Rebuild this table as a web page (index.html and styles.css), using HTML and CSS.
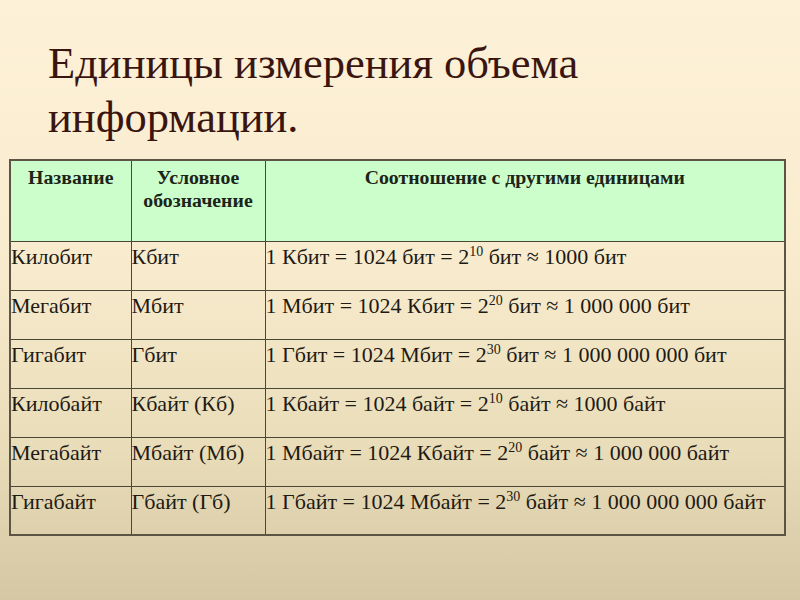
FILE: index.html
```html
<!DOCTYPE html>
<html lang="ru">
<head>
<meta charset="utf-8">
<title>Единицы измерения объема информации</title>
<link rel="stylesheet" href="styles.css">
</head>
<body>
<div class="slide">
  <h1 class="title">Единицы измерения объема<br>информации.</h1>
  <table class="units">
    <colgroup>
      <col class="c1"><col class="c2"><col class="c3">
    </colgroup>
    <thead>
      <tr>
        <th>Название</th>
        <th>Условное обозначение</th>
        <th>Соотношение с другими единицами</th>
      </tr>
    </thead>
    <tbody>
      <tr><td>Килобит</td><td>Кбит</td><td>1 Кбит = 1024 бит = 2<sup>10</sup> бит ≈ 1000 бит</td></tr>
      <tr><td>Мегабит</td><td>Мбит</td><td>1 Мбит = 1024 Кбит = 2<sup>20</sup> бит ≈ 1 000 000 бит</td></tr>
      <tr><td>Гигабит</td><td>Гбит</td><td>1 Гбит = 1024 Мбит = 2<sup>30</sup> бит ≈ 1 000 000 000 бит</td></tr>
      <tr><td>Килобайт</td><td>Кбайт (Кб)</td><td>1 Кбайт = 1024 байт = 2<sup>10</sup> байт ≈ 1000 байт</td></tr>
      <tr><td>Мегабайт</td><td>Мбайт (Мб)</td><td>1 Мбайт = 1024 Кбайт = 2<sup>20</sup> байт ≈ 1 000 000 байт</td></tr>
      <tr><td>Гигабайт</td><td>Гбайт (Гб)</td><td>1 Гбайт = 1024 Мбайт = 2<sup>30</sup> байт ≈ 1 000 000 000 байт</td></tr>
    </tbody>
  </table>
</div>
</body>
</html>
```
FILE: styles.css
```css
html, body {
  margin: 0;
  padding: 0;
}
body {
  width: 800px;
  height: 600px;
  overflow: hidden;
  background: linear-gradient(to bottom, #fdf1d8 0%, #f8ebcd 45%, #e9dcb8 75%, #d5c7a3 100%);
  font-family: "Liberation Serif", "Times New Roman", serif;
}
.slide {
  padding: 36px 16px 0 9px;
}
.title {
  margin: 0 0 0 39px;
  font-weight: normal;
  font-size: 44.5px;
  line-height: 54px;
  color: #3a1510;
  height: 123px;
}
.units {
  border-collapse: collapse;
  width: 775px;
  table-layout: fixed;
  border: 2px solid #5c5444;
}
.c1 { width: 121px; }
.c2 { width: 134px; }
.c3 { width: 520px; }
.units th {
  background: #ccfecc;
  border: 1px solid #4a4638;
  font-size: 19.8px;
  font-weight: bold;
  line-height: 23px;
  color: #1c2418;
  text-align: center;
  vertical-align: top;
  height: 81px;
  box-sizing: border-box;
  padding: 5px 2px 0;
}
.units td {
  border: 1px solid #4a4638;
  font-size: 22px;
  line-height: 24px;
  color: #1e1a14;
  vertical-align: top;
  height: 49px;
  padding: 3px 0 0 0;
  box-sizing: border-box;
  white-space: nowrap;
}
.units sup {
  font-size: 14px;
  line-height: 0;
  vertical-align: 8px;
}
```
